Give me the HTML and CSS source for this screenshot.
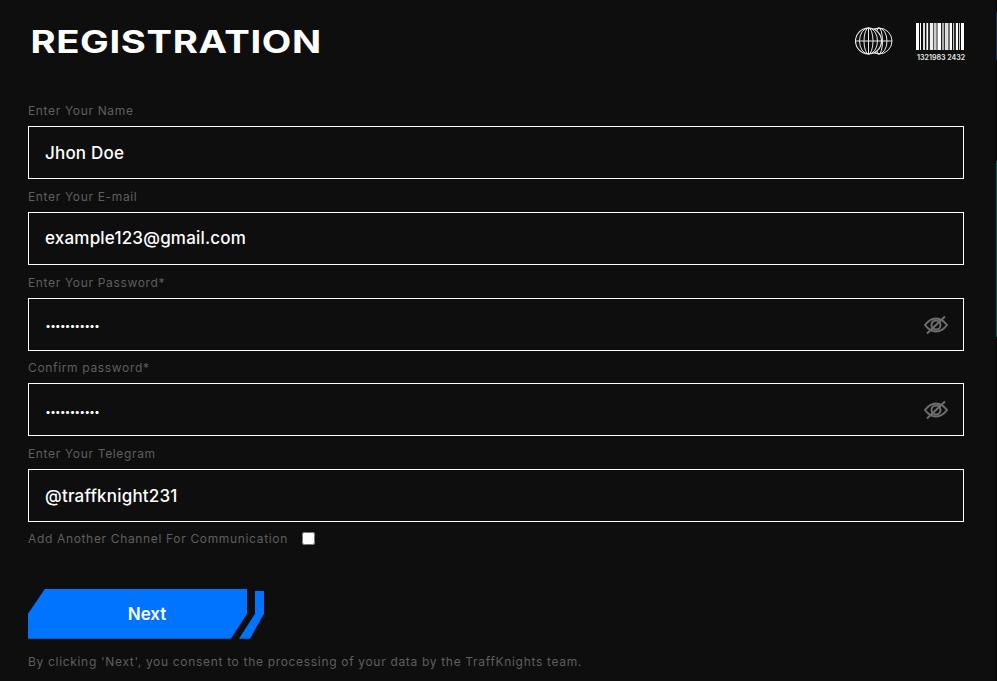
FILE: index.html
```html
<!DOCTYPE html>
<html lang="en">

<head>
    <meta charset="UTF-8">
    <meta name="viewport" content="width=device-width, initial-scale=1.0">
    <title>Registration</title>
    <link rel="stylesheet" href="styles.css">
</head>

<body>
    <div class="container">
        <div class="header">
            <h1>REGISTRATION</h1>
            <div class="header-icons">
                <svg class="globe" width="38" height="28" viewBox="0 0 38 28" fill="none" stroke="#e8e8e8" stroke-width="1">
                    <ellipse cx="24" cy="14" rx="13" ry="13" />
                    <ellipse cx="24" cy="14" rx="8" ry="13" />
                    <ellipse cx="24" cy="14" rx="3.500" ry="13" />
                    <path d="M24 14h13" />
                    <circle cx="13.500" cy="14" r="13" fill="#0e0e0e" stroke-width="1.200" />
                    <ellipse cx="13.500" cy="14" rx="9" ry="13" />
                    <ellipse cx="13.500" cy="14" rx="4.500" ry="13" />
                    <path d="M13.500 1v26M.5 14h26" />
                </svg>
                <div class="barcode">
                    <div class="bars" id="bars"></div>
                    <div class="barcode-num">1321983 2432</div>
                </div>
            </div>
        </div>

        <form class="form">
            <div class="input-group">
                <label for="name">Enter Your Name</label>
                <input type="text" id="name" value="Jhon Doe">
            </div>
            <div class="input-group">
                <label for="email">Enter Your E-mail</label>
                <input type="text" id="email" value="example123@gmail.com">
            </div>
            <div class="input-group">
                <label for="password">Enter Your Password*</label>
                <div class="field">
                    <input type="text" class="dots" id="password" value="...........">
                    <svg class="eye" width="24" height="20" viewBox="0 0 24 20" fill="none" stroke="#6e6e6e" stroke-width="2">
                        <path d="M1 10c3-4 7-6.500 11-6.500S20 6 23 10c-3 4-7 6.500-11 6.500S4 14 1 10z" />
                        <circle cx="12" cy="10" r="4.500" />
                        <path d="M21 1.500 3 18.500" />
                    </svg>
                </div>
            </div>
            <div class="input-group">
                <label for="confirm">Confirm password*</label>
                <div class="field">
                    <input type="text" class="dots" id="confirm" value="...........">
                    <svg class="eye" width="24" height="20" viewBox="0 0 24 20" fill="none" stroke="#6e6e6e" stroke-width="2">
                        <path d="M1 10c3-4 7-6.500 11-6.500S20 6 23 10c-3 4-7 6.500-11 6.500S4 14 1 10z" />
                        <circle cx="12" cy="10" r="4.500" />
                        <path d="M21 1.500 3 18.500" />
                    </svg>
                </div>
            </div>
            <div class="input-group">
                <label for="telegram">Enter Your Telegram</label>
                <input type="text" id="telegram" value="@traffknight231">
            </div>
            <div class="check-row">
                <label for="another">Add Another Channel For Communication</label>
                <input type="checkbox" id="another">
            </div>
            <button type="button" class="next-button">
                <span class="next-main">Next</span>
                <span class="next-stripe"></span>
            </button>
            <p class="consent">By clicking 'Next', you consent to the processing of your data by the TraffKnights team.</p>
        </form>
    </div>

    <div class="edge">
        <span class="edge-blue"></span>
        <span class="edge-teal"></span>
    </div>

    <script>
        // barcode strips: width in px and colour
        const strips = [
            [3, '#fff'], [1, '#0e0e0e'], [1, '#fff'], [2, '#0e0e0e'], [2, '#ddd'], [1, '#0e0e0e'], [1, '#999'], [1, '#fff'],
            [2, '#333'], [3, '#eee'], [1, '#555'], [2, '#ccc'], [2, '#888'], [3, '#fff'], [1, '#222'], [2, '#aaa'],
            [1, '#333'], [3, '#ddd'], [2, '#777'], [2, '#fff'], [1, '#0e0e0e'], [1, '#bbb'], [2, '#333'], [2, '#fff'],
            [1, '#0e0e0e'], [1, '#ccc'], [1, '#0e0e0e'], [3, '#fff']
        ];
        const bars = document.getElementById('bars');
        strips.forEach(strip => {
            const bar = document.createElement('span');
            bar.style.width = strip[0] + 'px';
            bar.style.backgroundColor = strip[1];
            bars.appendChild(bar);
        });
    </script>
</body>

</html>
```

FILE: styles.css
```css
* {
    box-sizing: border-box;
}

body {
    position: relative;
    margin: 0;
    height: 681px;
    overflow: hidden;
    background-color: #0e0e0e;
    font-family: 'Inter', sans-serif;
    color: #fff;
}

.container {
    padding: 0 33px 0 28px;
}

.header {
    display: flex;
    justify-content: space-between;
    align-items: flex-start;
    height: 103px;
    padding-top: 22px;
}

h1 {
    margin: 1px 0 0;
    padding-left: 2px;
    font-family: 'Inter', sans-serif;
    font-size: 31px;
    line-height: 38px;
    font-weight: 700;
    letter-spacing: 0.5px;
    transform: scaleX(1.235);
    transform-origin: left center;
}

.header-icons {
    display: flex;
    align-items: flex-start;
    gap: 23px;
}

.globe {
    margin-top: 5px;
}

.barcode {
    width: 48px;
    margin-top: 1px;
}

.bars {
    display: flex;
    height: 27px;
}

.barcode-num {
    margin-top: 4px;
    padding-left: 1px;
    font-size: 7px;
    line-height: 8px;
    font-weight: 700;
    color: #ddd;
    white-space: nowrap;
}

.input-group {
    display: flex;
    flex-direction: column;
    height: 85.750px;
}

label {
    font-size: 12px;
    line-height: 16px;
    letter-spacing: 0.66px;
    color: #5f5f5f;
}

.input-group label {
    margin-bottom: 7px;
}

input[type="text"] {
    width: 100%;
    height: 53px;
    padding: 0 16px;
    background-color: #0e0e0e;
    border: 1px solid #fff;
    border-radius: 0;
    outline: none;
    font-family: 'Inter', sans-serif;
    font-size: 17px;
    font-weight: 500;
    letter-spacing: 0.2px;
    color: #fff;
}

.field {
    position: relative;
}

input.dots {
    padding-bottom: 4px;
    font-weight: 800;
    letter-spacing: -1.1px;
}

.eye {
    position: absolute;
    right: 16px;
    top: 17px;
}

.check-row {
    display: flex;
    align-items: center;
    gap: 14px;
    height: 20px;
    margin-top: -3px;
}

.check-row input {
    width: 13px;
    height: 13px;
    margin: 0;
}

.next-button {
    display: flex;
    width: 236px;
    height: 50px;
    margin-top: 40px;
    padding: 0;
    border: none;
    background: none;
    color: #fff;
    cursor: pointer;
}

.next-main {
    display: flex;
    align-items: center;
    justify-content: center;
    width: 219px;
    height: 50px;
    padding-left: 19px;
    background-color: #0074ff;
    clip-path: polygon(17px 0, 100% 0, 100% 25px, 203px 100%, 0 100%, 0 25px);
    font-family: 'Inter', sans-serif;
    font-size: 17px;
    font-weight: 600;
}

.next-stripe {
    width: 25px;
    height: 48px;
    margin: 2px 0 0 -8px;
    background-color: #0074ff;
    clip-path: polygon(16px 0, 100% 0, 100% 23px, 11px 100%, 0 100%, 16px 23px);
}

.consent {
    margin: 15px 0 0;
    font-size: 12px;
    line-height: 16px;
    letter-spacing: 0.68px;
    color: #5f5f5f;
}

/* thin strip down the right side of the window */
.edge {
    position: absolute;
    top: 0;
    right: 0;
    width: 1px;
    height: 100%;
    background-color: #050505;
}

.edge span {
    position: absolute;
    left: 0;
    width: 1px;
}

.edge-blue {
    top: 12px;
    height: 48px;
    background-color: #12305c;
}

.edge-teal {
    top: 161px;
    height: 176px;
    background-color: #0c5a55;
}
```
